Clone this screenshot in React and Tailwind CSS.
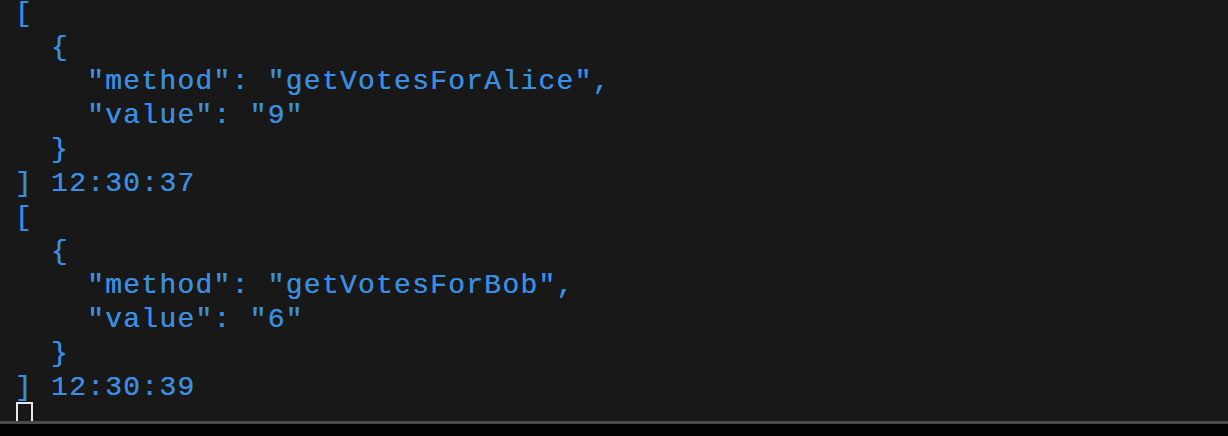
export default function App() {
  const lines = [
    "[",
    "  {",
    '    "method": "getVotesForAlice",',
    '    "value": "9"',
    "  }",
    "] 12:30:37",
    "[",
    "  {",
    '    "method": "getVotesForBob",',
    '    "value": "6"',
    "  }",
    "] 12:30:39",
  ];
  return (
    <div className="w-[1228px] h-[436px] bg-[#020202] flex flex-col overflow-hidden">
      <div className="h-[421px] bg-[#181818] overflow-hidden">
        <pre
          className="m-0 mt-[-3px] pl-[15px] text-[28px] tracking-[1.25px] leading-[34px] text-[#3a8ee2] [text-shadow:0_0_0.4px_#3a8ee2]"
          style={{ fontFamily: '"Liberation Mono", monospace' }}
        >
          {lines.join("\n")}
        </pre>
        <div className="ml-[16px] mt-[-3px] w-[17px] h-[28px] border-2 border-[#e8e8e8]"></div>
      </div>
      <div className="h-[3px] bg-[#4a4a4a]"></div>
      <div className="flex-1 bg-[#020202]"></div>
    </div>
  );
}
